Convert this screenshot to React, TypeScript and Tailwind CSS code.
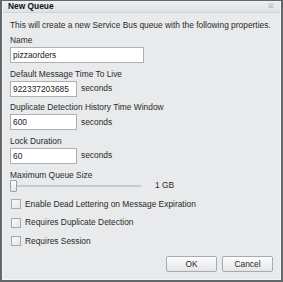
import React from 'react';

const font = { fontFamily: '"Liberation Sans", Arial, sans-serif' };

const Field: React.FC<{ label: string; value: string; wide?: boolean; unit?: string }> = ({ label, value, wide, unit }) => (
  <div className="flex flex-col">
    <div className="h-[11px] leading-[11px]">{label}</div>
    <div className="flex items-center mt-[1px]">
      <div className={`${wide ? 'w-[134px]' : 'w-[67px]'} h-[16px] bg-white border border-[#a9b0b8] px-[2px] leading-[14px] text-[#222] overflow-hidden whitespace-nowrap`}>
        {value}
      </div>
      {unit && <span className="ml-[4px]">{unit}</span>}
    </div>
  </div>
);

const Check: React.FC<{ label: string }> = ({ label }) => (
  <div className="flex items-center h-[13px]">
    <div className="ml-[1px] w-[10px] h-[10px] bg-gradient-to-br from-[#f7f8f9] to-[#e4e6e8] border border-[#a3a9b0]" />
    <span className="ml-[4px]">{label}</span>
  </div>
);

export default function App() {
  return (
    <div style={font} className="w-[283px] h-[282px] bg-[#62676c] pt-[1px] px-[2px] pb-[2px] text-[8.4px] text-[#2a2a2a]">
      <div className="w-full h-full flex flex-col bg-[#e8eaec] border-x border-b border-[#f4f5f6]">
        <div className="h-[12px] flex items-center justify-between pl-[5px] pr-[6px] bg-gradient-to-b from-[#eceef0] to-[#dfe2e5] border-b border-[#cfd3d7]">
          <span className="font-bold text-[#111]">New Queue</span>
          <span className="text-[#b5b9bd] text-[7px]">⊠</span>
        </div>
        <div className="flex flex-col pl-[7px] pr-[7px] pt-[7px]">
          <div className="h-[11px] leading-[11px]">This will create a new Service Bus queue with the following properties.</div>
          <div className="mt-[4px] flex flex-col gap-[5.5px]">
            <Field label="Name" value="pizzaorders" wide />
            <Field label="Default Message Time To Live" value="922337203685" unit="seconds" />
            <Field label="Duplicate Detection History Time Window" value="600" unit="seconds" />
            <Field label="Lock Duration" value="60" unit="seconds" />
          </div>
          <div className="mt-[6px] h-[10px] leading-[10px]">Maximum Queue Size</div>
          <div className="flex items-center h-[12px]">
            <div className="relative w-[131px] h-[12px] flex items-center">
              <div className="w-full h-[2px] bg-[#c6cacf]" />
              <div className="absolute left-0 top-0 w-[7px] h-[12px] bg-gradient-to-b from-[#fbfbfc] to-[#e2e5e8] border border-[#9ba2a9] rounded-[1px]" />
            </div>
            <span className="ml-[14px]">1 GB</span>
          </div>
          <div className="mt-[6px] flex flex-col gap-[5.5px]">
            <Check label="Enable Dead Lettering on Message Expiration" />
            <Check label="Requires Duplicate Detection" />
            <Check label="Requires Session" />
          </div>
          <div className="mt-[8.5px] flex justify-end gap-[5px]">
            <button className="w-[51px] h-[16px] bg-gradient-to-b from-[#fdfdfd] to-[#e3e5e7] border border-[#a5abb1] rounded-[2px]">OK</button>
            <button className="w-[51px] h-[16px] bg-gradient-to-b from-[#fdfdfd] to-[#e3e5e7] border border-[#a5abb1] rounded-[2px]">Cancel</button>
          </div>
        </div>
      </div>
    </div>
  );
}
